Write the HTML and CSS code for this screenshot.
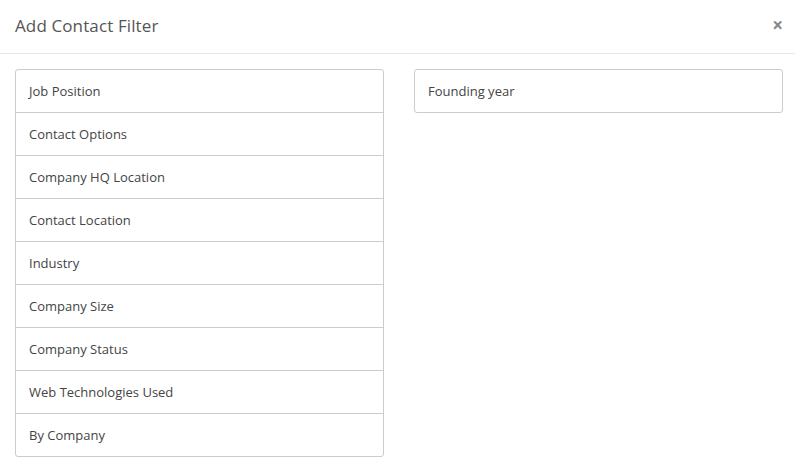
FILE: index.html
```html
<!DOCTYPE html>
<html>
<head>
<meta charset="utf-8">
<link rel="stylesheet" href="styles.css">
</head>
<body>
<div class="modal">
  <div class="modal-header">
    <h4 class="modal-title">Add Contact Filter</h4>
    <button class="close" type="button">×</button>
  </div>
  <div class="modal-body">
    <ul class="list">
      <li class="item">Job Position</li>
      <li class="item">Contact Options</li>
      <li class="item">Company HQ Location</li>
      <li class="item">Contact Location</li>
      <li class="item">Industry</li>
      <li class="item">Company Size</li>
      <li class="item">Company Status</li>
      <li class="item">Web Technologies Used</li>
      <li class="item">By Company</li>
    </ul>
    <ul class="list">
      <li class="item">Founding year</li>
    </ul>
  </div>
</div>
</body>
</html>
```
FILE: styles.css
```css
* { box-sizing: border-box; }
html, body { margin: 0; padding: 0; background: #fff; }
body { font-family: "Open Sans", "Liberation Sans", sans-serif; color: #444; }
.modal { width: 795px; }
.modal-header {
  height: 54px;
  border-bottom: 1px solid #e8e8e8;
  display: flex;
  align-items: center;
  justify-content: space-between;
  padding: 0 12px 0 15px;
}
.modal-title {
  margin: 0;
  font-size: 17px;
  letter-spacing: 0.12px;
  font-weight: 400;
  color: #555;
  line-height: 20px;
  padding-bottom: 2px;
}
.close {
  border: 0;
  background: none;
  padding: 0;
  font-family: "Open Sans", sans-serif;
  font-size: 19px;
  font-weight: 700;
  color: #888;
  line-height: 1;
  margin-bottom: 2px;
}
.modal-body {
  display: grid;
  grid-template-columns: 369px 369px;
  column-gap: 30px;
  padding: 15px 15px;
  align-items: start;
}
.list { list-style: none; margin: 0; padding: 0; }
.item {
  font-size: 13px;
  line-height: 20px;
  padding: 11px 13px;
  border: 1px solid #ccc;
  margin-bottom: -1px;
  color: #444;
}
.item:first-child { border-top-left-radius: 3px; border-top-right-radius: 3px; }
.item:last-child { border-bottom-left-radius: 3px; border-bottom-right-radius: 3px; margin-bottom: 0; }
```
